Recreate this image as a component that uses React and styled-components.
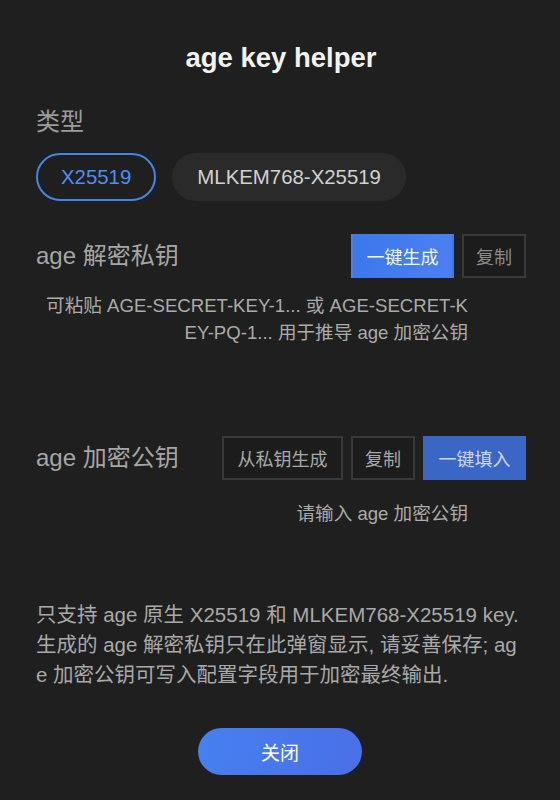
import React, { useState } from "react";
import styled, { createGlobalStyle, css } from "styled-components";

const GlobalStyle = createGlobalStyle`
  html, body {
    margin: 0;
    padding: 0;
    background: #1f1f1f;
  }
  body {
    font-family: "Liberation Sans", "Noto Sans CJK SC", sans-serif;
  }
  * { box-sizing: border-box; }
`;

const Dialog = styled.div`
  width: 560px;
  min-height: 800px;
  background: #1f1f1f;
  padding: 41px 34px 0 36px;
  display: flex;
  flex-direction: column;
`;

const Title = styled.h1`
  margin: 0;
  font-size: 27.5px;
  line-height: 33px;
  font-weight: 700;
  color: #f2f2f2;
  text-align: center;
`;

const SectionLabel = styled.div`
  margin-top: 32px;
  font-size: 24px;
  line-height: 32px;
  color: #9c9c9c;
`;

const PillGroup = styled.div`
  display: flex;
  gap: 16px;
  margin-top: 15px;
`;

const Pill = styled.button`
  height: 48px;
  padding: 0 23px;
  border-radius: 24px;
  font-family: inherit;
  font-size: 20.4px;
  cursor: pointer;
  ${(p) =>
    p.$active
      ? css`
          background: transparent;
          border: 2px solid #4584e6;
          color: #4f8ef0;
        `
      : css`
          background: #2a2a2a;
          border: 2px solid #2a2a2a;
          color: #d2d2d2;
        `}
`;

const FieldRow = styled.div`
  display: flex;
  align-items: center;
  justify-content: space-between;
  margin-top: ${(p) => p.$top}px;
`;

const FieldLabel = styled.div`
  font-size: 24px;
  line-height: 32px;
  color: #a6a6a6;
`;

const Actions = styled.div`
  display: flex;
  gap: 8px;
`;

const ActionButton = styled.button`
  height: 44px;
  padding: 0 ${(p) => (p.$compact ? 12 : 13.5)}px;
  font-family: inherit;
  font-size: 18px;
  border-radius: 0;
  cursor: pointer;
  ${(p) =>
    p.$variant === "primary"
      ? css`
          border: 2px solid transparent;
          background: linear-gradient(100deg, #3b78ea, #4d80f2);
          color: #f4f7ff;
        `
      : p.$variant === "fill"
      ? css`
          border: 2px solid transparent;
          background: #3a67c6;
          color: #cdd6ec;
        `
      : css`
          border: 2px solid #393939;
          background: #1c1c1c;
          color: ${p.$dim ? "#8a8a8a" : "#a9a9a9"};
        `}
`;

const Hint = styled.div`
  margin-top: ${(p) => p.$top}px;
  margin-right: 58px;
  font-size: 18.6px;
  line-height: 27px;
  color: #ababab;
  text-align: right;
  word-break: break-all;
`;

const Note = styled.p`
  margin: 73px 2px 0 0;
  font-size: 20.5px;
  line-height: 30px;
  color: #a9a9a9;
  word-break: break-all;
`;

const Footer = styled.div`
  display: flex;
  justify-content: center;
  margin-top: 38px;
  padding-right: 2px;
`;

const CloseButton = styled.button`
  width: 164px;
  height: 47px;
  border: none;
  border-radius: 24px;
  background: linear-gradient(100deg, #4680f0, #4a6fe6);
  color: #ffffff;
  font-family: inherit;
  font-size: 19px;
  cursor: pointer;
`;

export default function App() {
  const [type, setType] = useState("X25519");
  return (
    <>
      <GlobalStyle />
      <Dialog>
        <Title>age key helper</Title>
        <SectionLabel>类型</SectionLabel>
        <PillGroup>
          {["X25519", "MLKEM768-X25519"].map((t) => (
            <Pill key={t} $active={type === t} onClick={() => setType(t)}>
              {t}
            </Pill>
          ))}
        </PillGroup>

        <FieldRow $top={33}>
          <FieldLabel>age 解密私钥</FieldLabel>
          <Actions>
            <ActionButton $variant="primary">一键生成</ActionButton>
            <ActionButton $dim $compact>复制</ActionButton>
          </Actions>
        </FieldRow>
        <Hint $top={14}>
          可粘贴 AGE-SECRET-KEY-1... 或 AGE-SECRET-KEY-PQ-1... 用于推导 age 加密公钥
        </Hint>

        <FieldRow $top={90}>
          <FieldLabel>age 加密公钥</FieldLabel>
          <Actions>
            <ActionButton>从私钥生成</ActionButton>
            <ActionButton $compact>复制</ActionButton>
            <ActionButton $variant="fill">一键填入</ActionButton>
          </Actions>
        </FieldRow>
        <Hint $top={20}>请输入 age 加密公钥</Hint>

        <Note>
          只支持 age 原生 X25519 和 MLKEM768-X25519 key. 生成的 age 解密私钥只在此弹窗显示, 请妥善保存; age 加密公钥可写入配置字段用于加密最终输出.
        </Note>

        <Footer>
          <CloseButton>关闭</CloseButton>
        </Footer>
      </Dialog>
    </>
  );
}
